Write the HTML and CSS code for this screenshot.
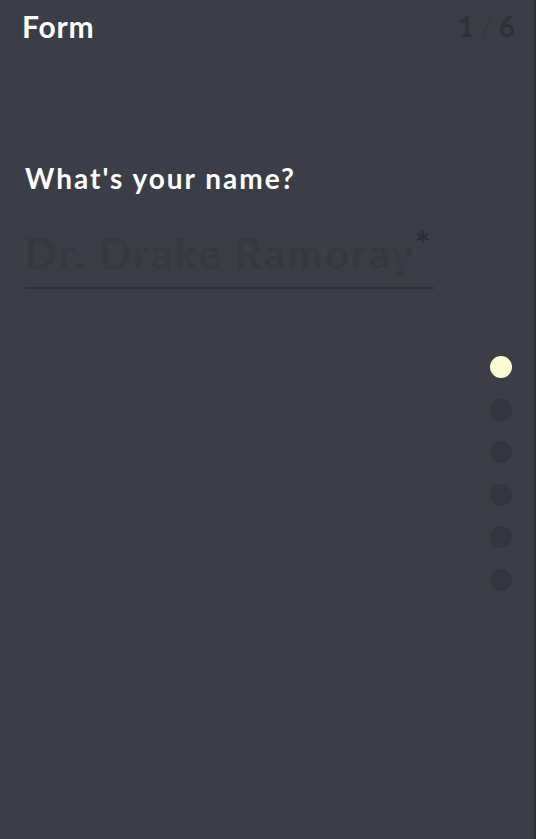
FILE: index.html
```html
<!DOCTYPE html>
<html>
<head>
<meta charset="utf-8">
<link rel="stylesheet" href="styles.css">
</head>
<body>
<div class="page">
  <header class="top">
    <div class="title">Form</div>
    <div class="counter"><span>1</span><span class="slash">/</span><span>6</span></div>
  </header>
  <main class="content">
    <label class="question">What's your name?</label>
    <div class="field">
      <span class="placeholder">Dr. Drake Ramoray</span><span class="req">*</span>
    </div>
  </main>
  <nav class="dots">
    <span class="dot active"></span>
    <span class="dot"></span>
    <span class="dot"></span>
    <span class="dot"></span>
    <span class="dot"></span>
    <span class="dot"></span>
  </nav>
  <div class="edge"></div>
</div>
</body>
</html>
```
FILE: styles.css
```css
html, body {
  margin: 0;
  padding: 0;
  height: 100%;
  background: #3b3e46;
  font-family: Lato, "Open Sans", sans-serif;
  overflow: hidden;
}
.page {
  position: relative;
  height: 839px;
  width: 536px;
}
.top {
  display: flex;
  justify-content: space-between;
  align-items: center;
  padding: 8px 21px 0 22px;
  height: 36px;
}
.title {
  color: #ffffff;
  font-weight: 700;
  font-size: 30px;
  letter-spacing: 0.8px;
}
.counter {
  color: #2f3137;
  font-weight: 700;
  font-size: 28px;
  display: flex;
  gap: 6px;
}
.counter .slash {
  color: #353840;
  font-weight: 400;
}
.content {
  padding: 117px 0 0 25px;
  display: flex;
  flex-direction: column;
}
.question {
  color: #ffffff;
  font-weight: 700;
  font-size: 28px;
  letter-spacing: 2px;
  line-height: 34px;
}
.field {
  margin-top: 33px;
  width: 409px;
  border-bottom: 2px solid #2e3035;
  height: 59px;
  display: flex;
  align-items: flex-start;
  box-sizing: content-box;
  white-space: nowrap;
}
.placeholder {
  flex-shrink: 0;
  color: #363940;
  font-weight: 700;
  font-size: 42px;
  line-height: 50px;
  letter-spacing: 2.2px;
}
.req {
  flex-shrink: 0;
  color: #2b2d32;
  font-size: 36px;
  font-weight: 700;
  line-height: 32px;
  margin-left: -1px;
}
.dots {
  position: absolute;
  left: 490px;
  top: 356px;
  display: flex;
  flex-direction: column;
  gap: 20.5px;
}
.dot {
  width: 22px;
  height: 22px;
  border-radius: 50%;
  background: #33363c;
  display: block;
}
.dot.active {
  background: #fdfbd2;
}
.edge {
  position: absolute;
  right: 0;
  top: 0;
  width: 2px;
  height: 100%;
  background: #30323a;
}
```
